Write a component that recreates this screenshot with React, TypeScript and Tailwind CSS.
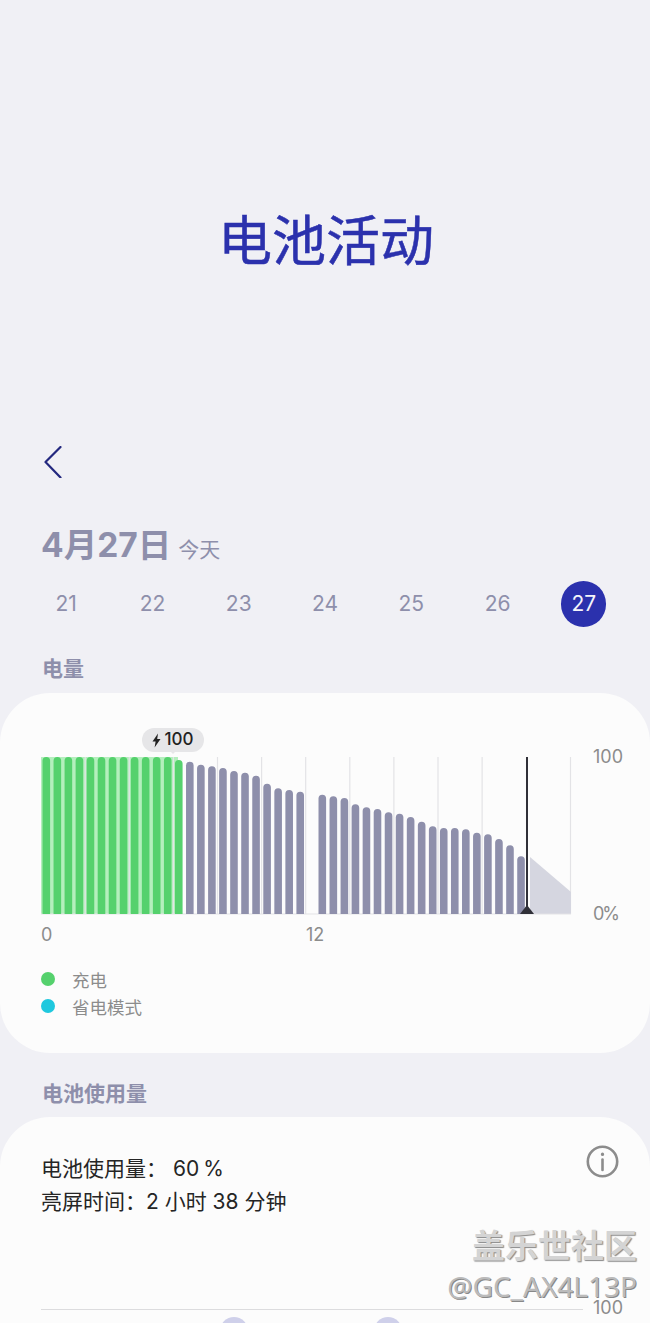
const tops = [757,757,757,757,757,757,757,757,757,757,757,757,760,761.7,764.7,766.3,768,771,772.7,775.7,783.7,788.3,790,791.7,0,794.7,796.3,798,804.3,807.3,809,812.3,813.7,817,821.7,826.3,828,828,829.3,832.7,834.3,839,845.3,856.3];
const font = { fontFamily: '"Inter", "Noto Sans CJK SC", sans-serif' };

function Chart() {
  const bottom = 157;
  return (
    <svg width="531" height="158" viewBox="41 0 531 158" className="block shrink-0">
      <rect x="41" y="0" width="137" height={bottom} fill="#b4efbd" />
      {[85.2, 129.3, 173.4, 217.5, 261.6, 305.7, 349.8, 393.9, 438, 482.1, 570.5].map((x) => (
        <line key={x} x1={x} x2={x} y1="0" y2={bottom} stroke="#e3e3e6" strokeWidth="1.2" />
      ))}
      <polygon points={`530,100 571,135 571,${bottom} 530,${bottom}`} fill="#d5d6e0" />
      <line x1="41" x2="571" y1={bottom} y2={bottom} stroke="#e3e3e6" strokeWidth="1" />
      {tops.map((t, i) => {
        if (!t) return null;
        const x = 46.3 + i * 11.04 - 3.8;
        const y = t - 757;
        const c = i <= 12 ? '#55d16d' : '#8e8fab';
        return <path key={i} d={`M${x} ${bottom}V${y + 3.8}a3.8 3.8 0 0 1 7.6 0V${bottom}Z`} fill={c} />;
      })}
      <line x1="527" x2="527" y1="0" y2={bottom} stroke="#303038" strokeWidth="2" />
      <polygon points={`520,${bottom} 527,${bottom - 9} 534,${bottom}`} fill="#303038" />
    </svg>
  );
}

export default function App() {
  return (
    <div className="relative w-[650px] h-[1323px] overflow-hidden bg-[#f0f0f5]" style={font}>
      <div className="h-[446px] pt-[209px] pl-[218px]">
        <h1 className="text-[54px] leading-[66px] text-[#2b31ad] font-normal [-webkit-text-stroke:0.5px_#2b31ad]">电池活动</h1>
      </div>
      <div className="pl-[44px] h-[30px]">
        <svg width="20" height="32" viewBox="0 0 20 32" fill="none" stroke="#23287f" strokeWidth="2.2" strokeLinecap="round" strokeLinejoin="round">
          <path d="M16.5 1 1.5 16l15 15.5" />
        </svg>
      </div>
      <div className="pl-[41px] h-[105px] flex items-end">
        <div className="flex items-baseline gap-[7px] pb-[14px]">
          <span className="text-[33.5px] leading-[44px] font-bold text-[#8e8fab]">4月27日</span>
          <span className="text-[21px] leading-[28px] text-[#8e8fab]">今天</span>
        </div>
      </div>
      <div className="flex h-[74px] pl-[23px] items-start">
        {[21, 22, 23, 24, 25, 26, 27].map((d) => (
          <div key={d} className="w-[86.3px] flex justify-center">
            {d === 27 ? (
              <div className="w-[45px] h-[46px] rounded-full bg-[#2b31ad] text-[#f4f4fa] text-[21px] flex items-center justify-center">{d}</div>
            ) : (
              <div className="h-[46px] text-[21px] flex items-center text-[#8e8fab]">{d}</div>
            )}
          </div>
        ))}
      </div>
      <div className="pl-[42px] h-[38px] text-[21px] leading-[28px] font-bold text-[#8e8fab]">电量</div>

      <div className="relative h-[360px] rounded-[50px] bg-[#fcfcfc] pt-[64px] pl-[41px]">
        <div className="flex h-[157px]">
          <Chart />
          <div className="flex flex-col justify-between -my-[13px] pl-[21px] text-[18px] leading-[26px] text-[#8c8c8c]">
            <span>100</span>
            <span className="tracking-[-2px]">0%</span>
          </div>
        </div>
        <div className="grid grid-cols-2 w-[530px] mt-[9px] text-[18px] leading-[24px] text-[#8c8c8c]">
          <span>0</span>
          <span>12</span>
        </div>
        <div className="flex flex-col mt-[20px] text-[17.5px] leading-[27px] text-[#8c8c8c]">
          <div className="flex items-center gap-[17px]"><span className="w-[14px] h-[14px] rounded-full bg-[#55d16d] -mt-[3px]" /><span>充电</span></div>
          <div className="flex items-center gap-[17px]"><span className="w-[14px] h-[14px] rounded-full bg-[#1fc8de] -mt-[3px]" /><span>省电模式</span></div>
        </div>
        <div className="absolute left-[142px] top-[35px] h-[24px] w-[62px] rounded-full bg-[#e6e6e8] flex items-center justify-center gap-[3px] text-[17px] font-medium text-[#222]">
          <svg width="9" height="15" viewBox="0 0 9 14" fill="#222"><path d="M6 0 0.5 8H3.6L2.6 14 8.5 5.6H5.2Z" /></svg>
          100
          <span className="absolute left-[28px] top-[23px] w-0 h-0 border-x-[3px] border-x-transparent border-t-[3px] border-t-[#e6e6e8]" />
        </div>
      </div>

      <div className="pl-[42px] h-[64px] pt-[27px] text-[21px] leading-[28px] font-bold text-[#8e8fab]">电池使用量</div>

      <div className="relative h-[206px] rounded-t-[50px] bg-[#fcfcfc] pt-[35px] pl-[41px] overflow-hidden">
        <div className="flex justify-between pr-[31px]">
          <div className="text-[21px] leading-[33px] text-[#252525]">
            <div>电池使用量： 60<span className="tracking-[2px] pl-[4px]">%</span></div>
            <div>亮屏时间：2 小时 38 分钟</div>
          </div>
          <svg className="-mt-[7px]" width="33" height="33" viewBox="0 0 33 33" fill="none" stroke="#8c8c8c" strokeWidth="2.6" strokeLinecap="round">
            <circle cx="16.5" cy="16.5" r="14.7" />
            <path d="M16.5 14.5V25" />
            <path d="M16.5 9v.4" strokeWidth="3.2" />
          </svg>
        </div>
        <div className="flex items-center gap-[10px] mt-[78px] h-[24px]">
          <div className="w-[542px] h-[1px] bg-[#dcdcde] mt-[2px]" />
          <span className="text-[18px] leading-[24px] text-[#8c8c8c]">100</span>
        </div>
        <div className="flex gap-[126px] pl-[179px] -mt-[3px]">
          <div className="w-[28px] h-[28px] rounded-full bg-[#cfd0ea]" />
          <div className="w-[28px] h-[28px] rounded-full bg-[#cfd0ea]" />
        </div>
      </div>

      <div className="absolute right-[13px] top-[1226px] text-[33px] leading-[40px] font-bold text-[#d4d4d4] [text-shadow:1px_1px_1px_#888]">盖乐世社区</div>
      <div className="absolute right-[13px] top-[1268px] text-[28px] leading-[36px] text-[#bbbbbb] [text-shadow:1px_1px_0px_#888]" style={{ fontFamily: '"Noto Sans", sans-serif' }}>@GC_AX4L13P</div>
    </div>
  );
}
